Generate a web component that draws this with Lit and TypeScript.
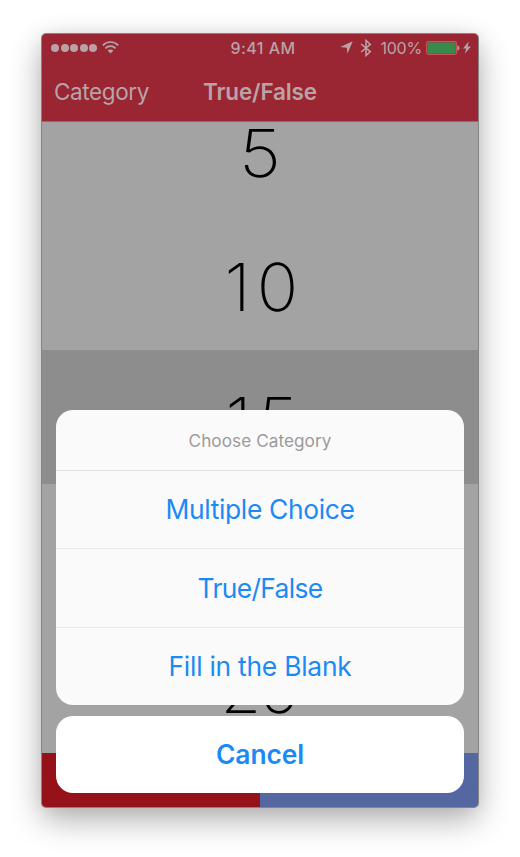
import { LitElement, html, css } from "lit";
import { customElement } from "lit/decorators.js";

@customElement("status-bar")
class StatusBar extends LitElement {
  static styles = css`
    :host { display: grid; grid-template-columns: 1fr auto 1fr; align-items: center; height: 27px; color: #b9a3a7; font-size: 16px; }
    .left { display: flex; align-items: center; gap: 1.55px; padding-left: 9px; }
    .dot { width: 8px; height: 8px; border-radius: 50%; background: currentColor; }
    .wifi { margin-left: 3.5px; }
    .time { font-weight: 550; letter-spacing: .45px; padding-left: 6px; }
    .right { display: flex; align-items: center; justify-content: flex-end; padding-right: 7.5px; }
    .pct { margin: 0 4px 0 8.5px; letter-spacing: -0.2px; }
    svg { display: block; }
    .bolt { margin-left: 2.5px; }
    .bt { margin-left: 6.5px; }
  `;
  render() {
    return html`
      <div class="left">
        ${[0, 1, 2, 3, 4].map(() => html`<span class="dot"></span>`)}
        <svg class="wifi" width="17" height="13" viewBox="0 0 17 13" fill="none" stroke="currentColor" stroke-width="1.7">
          <path d="M.8 4.3C5-.1 12-.1 16.2 4.3M3.4 7.3c2.8-2.9 7.4-2.9 10.2 0" />
          <path d="M8.5 12.6 5.6 9.6c1.6-1.5 4.2-1.5 5.8 0z" fill="currentColor" stroke="none" />
        </svg>
      </div>
      <span class="time">9:41 AM</span>
      <div class="right">
        <svg width="13" height="13" viewBox="0 0 13 13" fill="currentColor"><path d="M12.7.2 7.5 12.8 6.8 6.8.2 6z" /></svg>
        <svg class="bt" width="12" height="18" viewBox="0 0 12 18" fill="none" stroke="currentColor" stroke-width="1.5"><path d="M1.1 5 10.3 12.6 6 16.6V1.4l4.3 4-9.2 7.6" /></svg>
        <span class="pct">100%</span>
        <svg width="34" height="14" viewBox="0 0 34 14">
          <rect x=".6" y=".6" width="30" height="12.8" rx="1.8" fill="none" stroke="#c9525b" stroke-width="1.1" />
          <rect x="1.4" y="1.5" width="28.4" height="11" rx=".7" fill="#378c4d" />
          <path d="M31.4 4.5c2.7.4 2.7 4.6 0 5z" fill="currentColor" />
        </svg>
        <svg class="bolt" width="8" height="13" viewBox="0 0 8 13" fill="currentColor"><path d="M5.9.2 0 7.4h3.2L1.8 12.8 8 5.5H4.6z" /></svg>
      </div>
    `;
  }
}

@customElement("app-root")
class AppRoot extends LitElement {
  static styles = css`
    :host { display: block; box-sizing: border-box; height: 857px; padding: 34px 42px 50px; background: #fff; overflow: hidden; font-family: Inter, "Liberation Sans", sans-serif; }
    .phone { position: relative; display: flex; flex-direction: column; height: 773px; border-radius: 4px; box-shadow: 0 0 0 1px #858585, 0 12px 32px rgba(0, 0, 0, .33), 0 0 18px rgba(0, 0, 0, .06); }
    .screen { flex: 1; min-height: 0; display: flex; flex-direction: column; border-radius: 4px; overflow: hidden; background: #a3a3a3; }
    .top { height: 87px; background: #992632; border-bottom: 1px solid #8b6b6e; box-sizing: content-box; flex: none; }
    .nav { display: grid; grid-template-columns: 1fr auto 1fr; align-items: center; height: 60px; font-size: 22.5px; color: #b9a3a7; }
    .back { padding-left: 12px; letter-spacing: -.4px; }
    .title { font-weight: 570; letter-spacing: -.15px; }
    .picker { flex: 1; min-height: 0; overflow: hidden; margin-top: -1px; }
    .number { box-sizing: border-box; display: flex; align-items: center; justify-content: center; height: 134px; padding-top: 7px; font-size: 66px; line-height: 66px; font-weight: 200; color: #000; }
    .number:first-child { margin-top: -39px; }
    .n5 span { transform: scaleX(1.1); }
    .n10 span, .n15 span { transform: scaleX(1.04); letter-spacing: 6px; margin-right: -9px; }
    .n25 span { letter-spacing: -1px; margin-right: 2px; }
    .selected { background: #8d8d8d; }
    .footer { display: grid; grid-template-columns: 1fr 1fr; height: 54.5px; flex: none; }
    .red { background: #96121b; }
    .blue { background: #5567a1; }
    .sheet { position: absolute; left: 14px; right: 14px; bottom: 14px; display: flex; flex-direction: column; gap: 11px; font-size: 26.4px; color: #1b8af5; }
    .card { border-radius: 17px; overflow: hidden; background: #fafafa; }
    .heading, .option { display: flex; align-items: center; justify-content: center; }
    .heading { height: 60px; font-size: 17.2px; color: #9b9b9b; letter-spacing: .05px; }
    .option { box-sizing: border-box; height: 78.33px; padding-bottom: 1px; border-top: 1px solid #e9e9ec; letter-spacing: -.35px; }
    .heading + .option { border-top-color: #dededf; }
    .tight { letter-spacing: -.65px; }
    .loose { letter-spacing: -.25px; }
    .cancel { background: #fff; font-weight: 600; }
    .cancel .option { border: 0; height: 77px; letter-spacing: -.1px; }
  `;
  render() {
    const options = [
      ["Multiple Choice", ""],
      ["True/False", "tight"],
      ["Fill in the Blank", "loose"],
    ];
    return html`
      <div class="phone">
        <div class="screen">
          <div class="top">
            <status-bar></status-bar>
            <div class="nav"><span class="back">Category</span><span class="title">True/False</span></div>
          </div>
          <div class="picker">
            ${[5, 10, 15, 20, 25].map((n) => html`<div class="number n${n} ${n === 15 ? "selected" : ""}"><span>${n}</span></div>`)}
          </div>
          <div class="footer"><div class="red"></div><div class="blue"></div></div>
        </div>
        <div class="sheet">
          <div class="card">
            <div class="heading">Choose Category</div>
            ${options.map(([label, spacing]) => html`<div class="option ${spacing}">${label}</div>`)}
          </div>
          <div class="card cancel"><div class="option">Cancel</div></div>
        </div>
      </div>
    `;
  }
}
